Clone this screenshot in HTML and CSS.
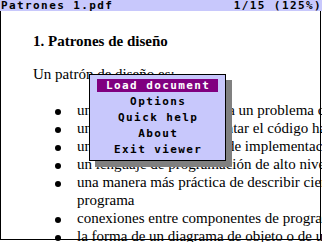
FILE: index.html
```html
<!DOCTYPE html>
<html lang="es">
<head>
<meta charset="utf-8">
<title>Patrones 1.pdf</title>
<link rel="stylesheet" href="styles.css">
</head>
<body>
<div class="titlebar">
  <span class="title-name">Patrones 1.pdf</span>
  <span class="title-page">1/15 (125%)</span>
</div>
<div class="page">
  <h1 class="heading">1. Patrones de diseño</h1>
  <p class="intro">Un patrón de diseño es:</p>
  <ul class="items">
    <li>una solución reutilizable a un problema común</li>
    <li>una técnica para documentar el código habitual</li>
    <li>un conjunto de prácticas de implementación</li>
    <li>un lenguaje de programación de alto nivel</li>
    <li>una manera más práctica de describir ciertos aspectos de la organización de un<br>programa</li>
    <li>conexiones entre componentes de programas</li>
    <li>la forma de un diagrama de objeto o de un modelo</li>
  </ul>
</div>
<div class="menu">
  <div class="menu-item active">Load document</div>
  <div class="menu-item">Options</div>
  <div class="menu-item">Quick help</div>
  <div class="menu-item">About</div>
  <div class="menu-item">Exit viewer</div>
</div>
</body>
</html>
```
FILE: styles.css
```css
html, body {
  margin: 0;
  padding: 0;
  background: #fff;
}
body {
  width: 322px;
  height: 242px;
  overflow: hidden;
  position: relative;
}
.titlebar {
  height: 11px;
  background: #c8c8fc;
  display: flex;
  justify-content: space-between;
  padding: 0 0 0 1px;
  font: bold 11px/11px "DejaVu Sans Mono", monospace;
  letter-spacing: 1.4px;
  color: #000;
  white-space: pre;
}
.page {
  box-sizing: border-box;
  width: 321px;
  height: 229px;
  border-left: 1px solid #000;
  border-right: 1px solid #000;
  border-bottom: 1px solid #000;
  padding: 21px 0 0 32px;
  font-family: "Liberation Serif", "Times New Roman", serif;
  font-size: 15px;
  line-height: 18px;
  color: #000;
}
.heading {
  margin: 0;
  font-size: 15px;
  line-height: 18px;
  font-weight: bold;
  white-space: nowrap;
}
.intro {
  margin: 15px 0 0;
  white-space: nowrap;
}
.items {
  list-style: none;
  margin: 18px 0 0;
  padding: 0;
}
.items li {
  display: flex;
  white-space: nowrap;
}
.items li::before {
  content: "";
  flex: none;
  width: 6px;
  height: 6px;
  border-radius: 50%;
  background: #000;
  margin: 8px 16px 0 22px;
}
.menu {
  position: absolute;
  left: 89px;
  top: 74px;
  width: 121px;
  padding: 4px 7px;
  border: 1px solid #000;
  background: #c8c8fc;
  box-shadow: 6px 6px 0 #808080;
  display: flex;
  flex-direction: column;
  gap: 3px;
}
.menu-item {
  height: 13px;
  padding-left: 1.4px;
  text-align: center;
  font: bold 11px/13px "DejaVu Sans Mono", monospace;
  letter-spacing: 1.4px;
  color: #000;
  white-space: pre;
}
.menu-item.active {
  background: #800080;
  color: #fff;
}
```
